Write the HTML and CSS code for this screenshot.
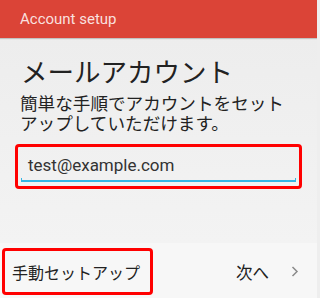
FILE: index.html
```html
<!DOCTYPE html>
<html lang="ja">
<head>
<meta charset="utf-8">
<link rel="stylesheet" href="styles.css">
</head>
<body>
<div class="screen">
  <header class="appbar">Account setup</header>
  <main class="content">
    <h1 class="title">メールアカウント</h1>
    <p class="lead">簡単な手順でアカウントをセット<br>アップしていただけます。</p>
    <div class="field-box">
      <div class="field-text">test@example.com</div>
      <div class="field-line"></div>
    </div>
  </main>
  <footer class="actions">
    <div class="manual">手動セットアップ</div>
    <div class="next">
      <span class="next-label">次へ</span>
      <svg class="chev" width="8" height="11" viewBox="0 0 8 11"><polyline points="1.5,1 6,5.5 1.5,10" fill="none" stroke="#8a8a8a" stroke-width="1.5"/></svg>
    </div>
  </footer>
</div>
</body>
</html>
```
FILE: styles.css
```css
html, body {
  margin: 0;
  padding: 0;
}
body {
  width: 317px;
  height: 298px;
  overflow: hidden;
  background: #eeeeee;
  font-family: "Noto Sans CJK JP", "Noto Sans", sans-serif;
  color: #222;
}
.screen {
  display: flex;
  flex-direction: column;
  height: 298px;
}
.appbar {
  height: 38px;
  flex: none;
  background: #db4437;
  box-shadow: 0 1px 1px rgba(0,0,0,0.18);
  display: flex;
  align-items: center;
  padding-left: 20px;
  font-family: Roboto, "Liberation Sans", sans-serif;
  font-size: 15px;
  color: rgba(255,255,255,0.85);
  position: relative;
  z-index: 1;
}
.content {
  flex: 1;
  padding: 0 15px;
  background: linear-gradient(#ededed, #f3f3f3);
}
.title {
  margin: 17px 0 0 6px;
  font-size: 26.5px;
  line-height: 32px;
  font-weight: 400;
  color: #222;
}
.lead {
  margin: 6px 0 0 5px;
  font-size: 17.6px;
  line-height: 20px;
  color: #222;
}
.field-box {
  margin-top: 11px;
  height: 39px;
  border: 3px solid #ff0000;
  border-radius: 4px;
  padding: 0 3px;
}
.field-text {
  padding: 8px 0 0 7px;
  height: 20px;
  font-family: Roboto, "Liberation Sans", sans-serif;
  font-size: 17px;
  line-height: 20px;
  color: #333;
}
.field-line {
  margin-top: 3px;
  height: 2px;
  border: 0 solid #33b5e5;
  border-width: 0 1px 2px 1px;
}
.actions {
  height: 55px;
  flex: none;
  background: #f7f7f7;
  display: flex;
  align-items: center;
  justify-content: space-between;
}
.manual {
  margin-left: 2px;
  margin-top: 2px;
  width: 138px;
  height: 41px;
  border: 3px solid #ff0000;
  border-radius: 4px;
  display: flex;
  align-items: center;
  padding-left: 7px;
  font-size: 16px;
  color: #222;
}
.next {
  display: flex;
  align-items: center;
  margin-right: 18px;
  margin-top: 2px;
}
.next-label {
  font-size: 16.5px;
  color: #222;
}
.chev {
  margin-left: 22px;
}
```
